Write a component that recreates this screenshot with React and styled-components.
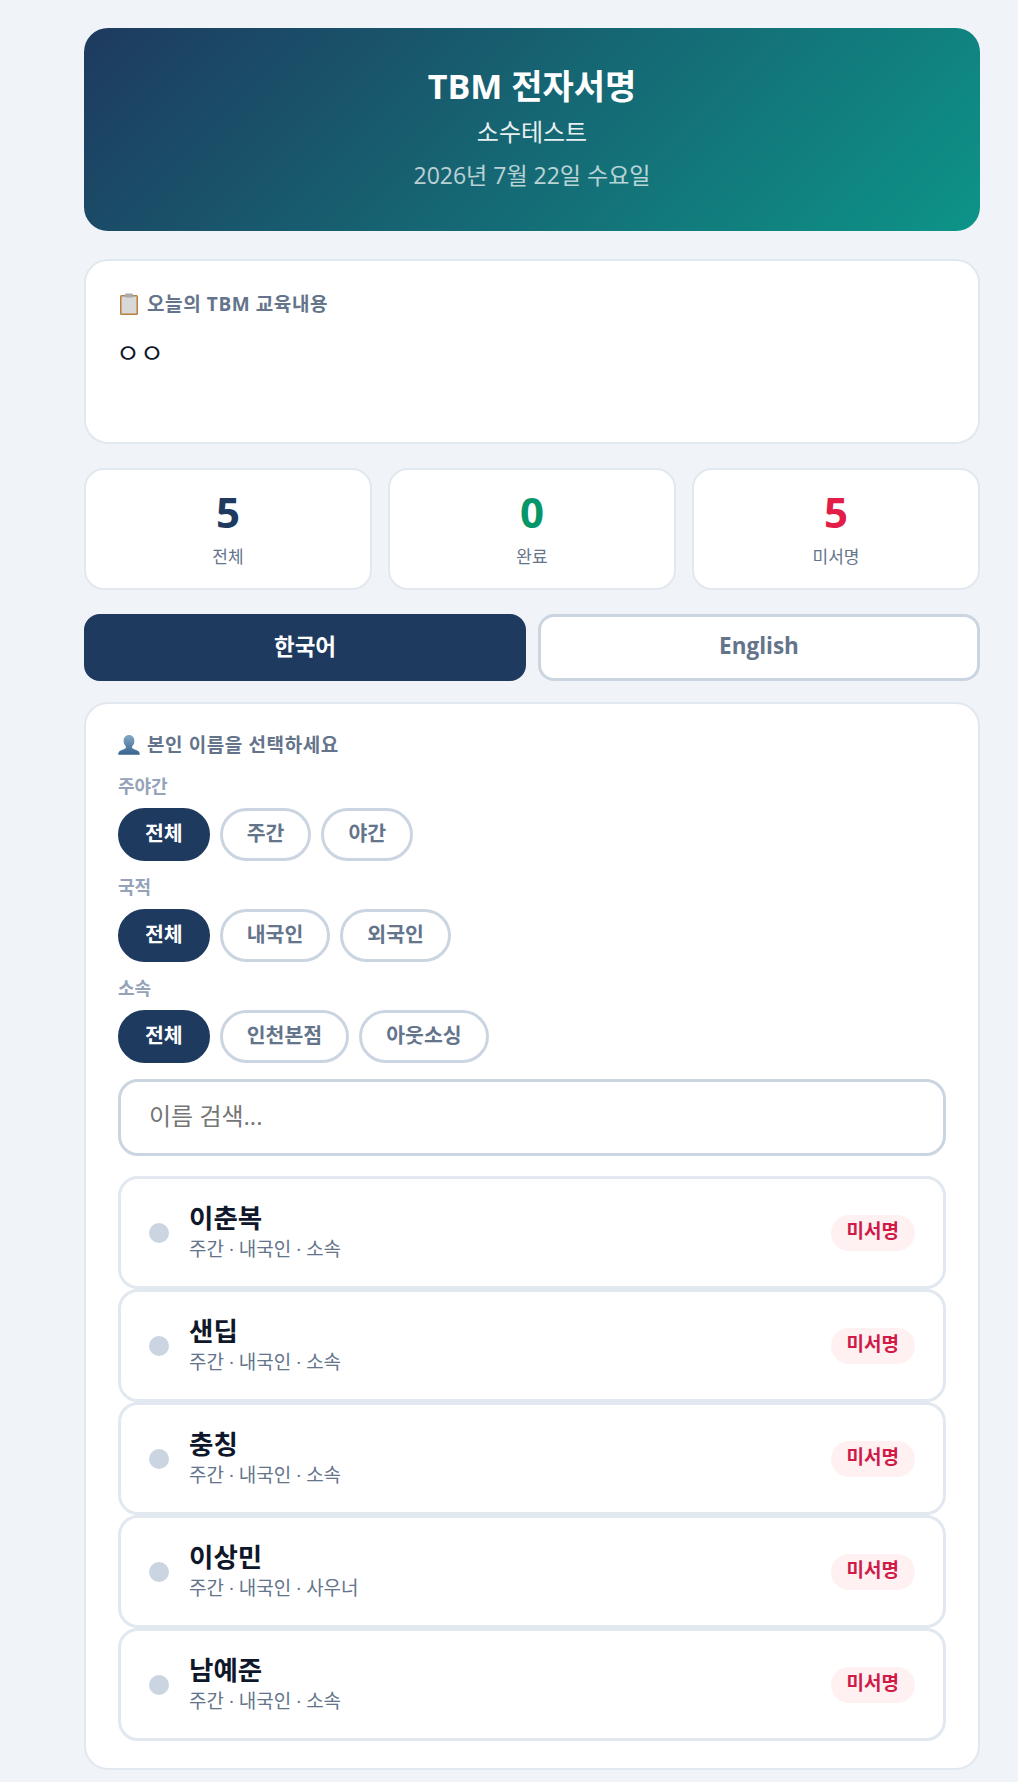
import React from 'react';
import styled, { createGlobalStyle } from 'styled-components';

const FONT = '"Open Sans", "Noto Sans CJK KR", sans-serif';

const GlobalStyle = createGlobalStyle`
  html, body { margin: 0; padding: 0; background: #f0f4f9; }
  body { font-family: ${FONT}; }
  * { box-sizing: border-box; }
`;

const Page = styled.div`
  width: 896px;
  margin-left: 84px;
  padding: 28px 0 13px;
  display: flex;
  flex-direction: column;
`;

const Header = styled.header`
  height: 203px;
  border-radius: 24px;
  background: linear-gradient(135deg, #1e3a5f, #0d9488);
  color: #fff;
  text-align: center;
  padding-top: 35px;
  margin-bottom: 28px;
`;
const Title = styled.h1`
  margin: 0;
  font-size: 34px;
  line-height: 46px;
  font-weight: 700;
`;
const Subtitle = styled.div`
  font-size: 24px;
  line-height: 32px;
  margin-top: 7px;
  opacity: 0.9;
`;
const DateLine = styled.div`
  font-size: 23px;
  line-height: 30px;
  margin-top: 12px;
  opacity: 0.7;
`;

const Card = styled.section`
  background: #fff;
  border: 2px solid #e2e8f0;
  border-radius: 24px;
  padding: 30px 32px;
`;
const NoticeCard = styled(Card)`
  height: 185px;
  margin-bottom: 24px;
`;
const CardLabel = styled.div`
  display: flex;
  align-items: center;
  gap: 7px;
  margin-bottom: ${p => p.$gap || 0}px;
  font-size: 19px;
  line-height: 26px;
  font-weight: 700;
  letter-spacing: 0.6px;
  color: #64748b;
`;
const IconSlot = styled.span`
  width: 22px;
  height: 22px;
  display: flex;
  justify-content: center;
  flex: none;
`;
const NoticeBody = styled.div`
  font-size: 26px;
  line-height: 36px;
  color: #0f172a;
  margin: 18px 0 0 -2px;
`;

const Stats = styled.div`
  display: grid;
  grid-template-columns: repeat(3, 1fr);
  gap: 16px;
  margin-bottom: 24px;
`;
const StatCard = styled.div`
  height: 122px;
  background: #fff;
  border: 2px solid #e2e8f0;
  border-radius: 20px;
  text-align: center;
  padding-top: 17px;
`;
const StatValue = styled.div`
  font-size: 42px;
  line-height: 50px;
  font-weight: 700;
  color: ${p => p.$color};
`;
const StatLabel = styled.div`
  font-size: 17px;
  line-height: 24px;
  margin-top: 8px;
  color: #64748b;
`;

const LangRow = styled.div`
  display: grid;
  grid-template-columns: 1fr 1fr;
  gap: 12px;
  margin-bottom: 21px;
`;
const LangButton = styled.button`
  height: 67px;
  padding: 0 0 5px;
  border-radius: 16px;
  font: 700 22.5px ${FONT};
  border: 3px solid ${p => (p.$active ? '#1e3a5f' : '#cbd5e1')};
  background: ${p => (p.$active ? '#1e3a5f' : '#fff')};
  color: ${p => (p.$active ? '#fff' : '#64748b')};
`;

const PickerCard = styled(Card)`
  padding: 28px 32px 27px;
`;
const FilterGroup = styled.div`
  padding-top: 13px;
`;
const FilterLabel = styled.div`
  font-size: 18px;
  line-height: 27px;
  font-weight: 600;
  color: #94a3b8;
`;
const ChipRow = styled.div`
  display: flex;
  gap: 10px;
  margin-top: 8px;
`;
const Chip = styled.button`
  height: 53px;
  padding: 0 24px 5px;
  border-radius: 27px;
  font: 700 20.5px ${FONT};
  border: 3px solid ${p => (p.$active ? '#1e3a5f' : '#cbd5e1')};
  background: ${p => (p.$active ? '#1e3a5f' : '#fff')};
  color: ${p => (p.$active ? '#fff' : '#64748b')};
`;
const SearchInput = styled.input`
  display: block;
  width: 100%;
  height: 77px;
  margin-top: 16px;
  padding: 0 28px 4px;
  border: 3px solid #cbd5e1;
  border-radius: 20px;
  font: 400 24px ${FONT};
  color: #0f172a;
  &::placeholder { color: #757575; opacity: 1; }
`;

const List = styled.div`
  display: flex;
  flex-direction: column;
  margin-top: 20px;
`;
const Row = styled.div`
  height: 113px;
  display: flex;
  align-items: center;
  padding: 0 28px;
  border: 3px solid #e2e8f0;
  border-radius: 20px;
  background: #fff;
`;
const Dot = styled.span`
  width: 20px;
  height: 20px;
  border-radius: 50%;
  background: #cbd5e1;
  margin-right: 20px;
  flex: none;
`;
const RowText = styled.div`
  flex: 1;
  padding-bottom: 3px;
`;
const PersonName = styled.div`
  font-size: 26.5px;
  line-height: 36px;
  font-weight: 700;
  color: #0f172a;
`;
const PersonMeta = styled.div`
  font-size: 19px;
  line-height: 26px;
  color: #64748b;
`;
const Badge = styled.span`
  height: 36px;
  line-height: 33px;
  padding: 0 16px;
  border-radius: 18px;
  background: #fff1f2;
  color: #d01a47;
  font-size: 19px;
  font-weight: 700;
`;

const ClipboardIcon = () => (
  <svg width="18" height="22" viewBox="0 0 18 22">
    <rect x="0" y="2" width="18" height="20" rx="1.500" fill="#b7803f" />
    <rect x="1.500" y="3.500" width="15" height="17" fill="#d8d8d8" />
    <rect x="5" y="0.500" width="8" height="4" rx="1" fill="#a9a9a9" />
  </svg>
);

const PersonIcon = () => (
  <svg width="22" height="22" viewBox="0 0 22 22">
    <defs>
      <linearGradient id="bust" x1="0" y1="0" x2="0" y2="1">
        <stop offset="0" stopColor="#86a9c8" />
        <stop offset="1" stopColor="#38648c" />
      </linearGradient>
    </defs>
    <path
      d="M11 1c3.3 0 5.400 2.600 5.400 5.800 0 2.400-1 4.400-2.300 5.600v1.400c0 1 3.400 1.900 5.600 3 1.300.7 2 1.800 2.100 3.900H.2c.1-2.100.8-3.200 2.100-3.900 2.200-1.100 5.600-2 5.600-3v-1.400C6.600 11.200 5.600 9.200 5.600 6.800 5.600 3.600 7.700 1 11 1z"
      fill="url(#bust)"
    />
  </svg>
);

const filters = [
  { label: '주야간', options: ['전체', '주간', '야간'] },
  { label: '국적', options: ['전체', '내국인', '외국인'] },
  { label: '소속', options: ['전체', '인천본점', '아웃소싱'] },
];

const people = [
  { name: '이춘복', team: '소속' },
  { name: '샌딥', team: '소속' },
  { name: '충칭', team: '소속' },
  { name: '이상민', team: '사우너' },
  { name: '남예준', team: '소속' },
];

export default function App() {
  return (
    <Page>
      <GlobalStyle />
      <Header>
        <Title>TBM 전자서명</Title>
        <Subtitle>소수테스트</Subtitle>
        <DateLine>2026년 7월 22일 수요일</DateLine>
      </Header>

      <NoticeCard>
        <CardLabel><IconSlot><ClipboardIcon /></IconSlot>오늘의 TBM 교육내용</CardLabel>
        <NoticeBody>ㅇㅇ</NoticeBody>
      </NoticeCard>

      <Stats>
        <StatCard><StatValue $color="#1e3a5f">5</StatValue><StatLabel>전체</StatLabel></StatCard>
        <StatCard><StatValue $color="#059669">0</StatValue><StatLabel>완료</StatLabel></StatCard>
        <StatCard><StatValue $color="#e11d48">5</StatValue><StatLabel>미서명</StatLabel></StatCard>
      </Stats>

      <LangRow>
        <LangButton $active>한국어</LangButton>
        <LangButton>English</LangButton>
      </LangRow>

      <PickerCard>
        <CardLabel $gap={2}><IconSlot><PersonIcon /></IconSlot>본인 이름을 선택하세요</CardLabel>
        {filters.map(f => (
          <FilterGroup key={f.label}>
            <FilterLabel>{f.label}</FilterLabel>
            <ChipRow>
              {f.options.map((o, i) => <Chip key={o} $active={i === 0}>{o}</Chip>)}
            </ChipRow>
          </FilterGroup>
        ))}
        <SearchInput placeholder="이름 검색..." />
        <List>
          {people.map(p => (
            <Row key={p.name}>
              <Dot />
              <RowText>
                <PersonName>{p.name}</PersonName>
                <PersonMeta>주간 · 내국인 · {p.team}</PersonMeta>
              </RowText>
              <Badge>미서명</Badge>
            </Row>
          ))}
        </List>
      </PickerCard>
    </Page>
  );
}
